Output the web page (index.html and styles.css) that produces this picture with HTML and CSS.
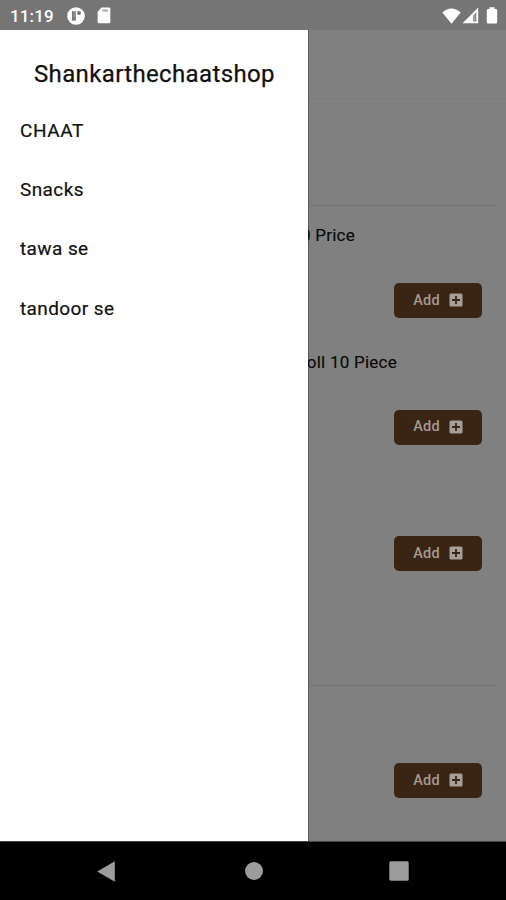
FILE: index.html
```html
<!DOCTYPE html>
<html lang="en">
<head>
<meta charset="utf-8">
<title>Shankarthechaatshop</title>
<link rel="stylesheet" href="styles.css">
</head>
<body>
<svg width="0" height="0" class="defs" aria-hidden="true">
  <symbol id="plus" viewBox="0 0 14 14"><path fill-rule="evenodd" d="M2 0.5H12Q13.5 .5 13.5 2V12Q13.5 13.5 12 13.5H2Q.5 13.5 .5 12V2Q.5 .5 2 .5ZM6.1 3V6.1H3V7.9H6.1V11H7.9V7.9H11V6.1H7.9V3Z"/></symbol>
</svg>
<div class="phone">
  <header class="status">
    <span class="time">11:19</span>
    <svg class="app" width="18" height="18" viewBox="0 0 18 18"><circle cx="9" cy="9" r="8.8" fill="#fff"/><path d="M5 4.2H8.8V13.6H5Z" fill="#777"/><path d="M6.5 5.4H7.4V10H6.5Z" fill="#aaa"/><circle cx="12" cy="6" r="2" fill="#777"/></svg>
    <svg class="sd" width="14" height="17" viewBox="0 0 14 17"><path d="M4.5.5H12Q13.3.5 13.3 1.8V15Q13.3 16.3 12 16.3H2Q.6 16.3.6 15V4.8Z" fill="#fff"/><path d="M5.3 2.5H11V4.6H5.3Z" fill="#aaa"/></svg>
    <span class="fill"></span>
    <svg class="wifi" width="19" height="16" viewBox="0 0 19 16"><path d="M.3 4.5Q9.5-3.3 18.7 4.5L9.5 15.7Z" fill="#fff"/></svg>
    <svg class="signal" width="17" height="17" viewBox="0 0 17 17"><path fill-rule="evenodd" d="M16.2.5V16.3H.5ZM14.3 5.2L11.2 8.5V14.5H14.3Z" fill="#fff"/><path d="M12.2 8.4L13.3 7.2V13.7H12.2Z" fill="#bbb"/></svg>
    <svg class="battery" width="12" height="17" viewBox="0 0 12 17"><path d="M3.5.3H8.5V2H10Q11.2 2 11.2 3.2V15.3Q11.2 16.5 10 16.5H2Q.8 16.5.8 15.3V3.2Q.8 2 2 2H3.5Z" fill="#fff"/></svg>
  </header>
  <main class="screen">
    <nav class="drawer">
      <h1>Shankarthechaatshop</h1>
      <ul>
        <li class="caps">CHAAT</li>
        <li>Snacks</li>
        <li>tawa se</li>
        <li>tandoor se</li>
      </ul>
    </nav>
    <section class="content">
      <div class="topbar"></div>
      <div class="heading"></div>
      <div class="item"><p class="name price">0 Price</p><button>Add <svg width="14" height="14"><use href="#plus"/></svg></button></div>
      <div class="item"><p class="name piece">oll 10 Piece</p><button>Add <svg width="14" height="14"><use href="#plus"/></svg></button></div>
      <div class="item"><p class="name"></p><button>Add <svg width="14" height="14"><use href="#plus"/></svg></button></div>
      <div class="heading next"></div>
      <div class="item"><p class="name"></p><button>Add <svg width="14" height="14"><use href="#plus"/></svg></button></div>
    </section>
  </main>
  <footer class="keys">
    <svg width="18" height="21" viewBox="0 0 18 21"><path d="M17.8.3V20.7L.2 10.5Z"/></svg>
    <svg class="home" width="18" height="18" viewBox="0 0 18 18"><circle cx="9" cy="9" r="9"/></svg>
    <svg width="20" height="20" viewBox="0 0 20 20"><rect x=".3" y=".3" width="19.4" height="19.4" rx="1.5"/></svg>
  </footer>
</div>
</body>
</html>
```

FILE: styles.css
```css
* { box-sizing: border-box; }
body { margin: 0; font-family: Roboto, sans-serif; color: #111; }
.defs { display: block; }
.phone { display: flex; flex-direction: column; width: 506px; height: 900px; overflow: hidden; }
.status { display: flex; align-items: center; flex: 0 0 30px; padding: 1px 8px 0 10px; background: #757575; color: #fff; }
.time { width: 57px; font-size: 17px; font-weight: 500; letter-spacing: .15px; }
.sd { margin-left: 12px; }
.fill { flex: 1; }
.signal { margin-left: 1px; }
.battery { margin-left: 7px; }
.screen { display: flex; flex: 0 0 812px; border-bottom: 1px solid #444; background: #808080; }
.drawer { flex: 0 0 308px; background: #fff; }
h1 { height: 71px; margin: 0; padding: 28px 0 0 34px; font-size: 24px; line-height: 32px; font-weight: 400; letter-spacing: .36px; -webkit-text-stroke: .25px; white-space: nowrap; }
ul { margin: 0; padding: 0; list-style: none; }
li { height: 59.2px; padding-left: 20px; font-size: 19px; line-height: 60px; letter-spacing: .4px; -webkit-text-stroke: .2px; }
.caps { letter-spacing: .6px; }
.content { flex: 1; overflow: hidden; box-shadow: inset 1px 0 #5a5a5a; }
.topbar { height: 69px; border-bottom: 1px solid #7a7a7a; }
.heading { height: 107px; margin-right: 10px; border-bottom: 1px solid #747474; }
.item { display: flex; flex-direction: column; align-items: flex-end; height: 126.5px; padding: 17px 24px 0 0; }
.name { height: 24px; margin: 0; font-size: 17px; line-height: 24px; letter-spacing: .25px; color: #080808; white-space: nowrap; -webkit-text-stroke: .15px; }
.price { margin-right: 127px; }
.piece { margin-right: 85px; }
button { display: flex; align-items: center; justify-content: center; gap: 9px; width: 88px; height: 35px; margin-top: 36px; padding: 0 0 1px; border: 0; border-radius: 5px; background: #3a2413; color: #a49a91; font: 500 14.5px Roboto, sans-serif; letter-spacing: .2px; }
button svg { fill: #a69f99; }
.next { height: 100.5px; }
.keys { display: flex; align-items: center; justify-content: space-between; flex: 1; padding: 0 97px; background: #000; }
.keys svg { fill: #9c9c9c; }
.keys .home { margin-left: 3px; }
```
